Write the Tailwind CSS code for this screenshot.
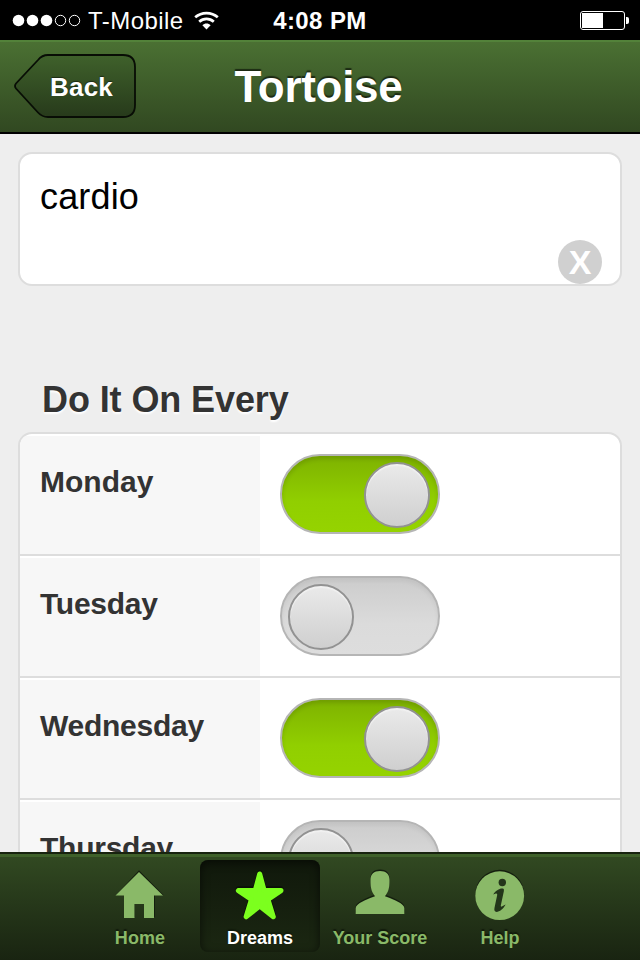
<!DOCTYPE html>
<html lang="en">
<head>
<meta charset="utf-8">
<title>Tortoise</title>
<script src="https://cdn.jsdelivr.net/npm/@tailwindcss/browser@4"></script>
</head>
<body class="w-[640px] h-[960px] overflow-hidden bg-[#eeeeee] font-['Liberation_Sans',Arial,sans-serif]">
<div class="flex flex-col h-[960px] overflow-hidden">

  <!-- Status bar -->
  <div class="h-10 shrink-0 bg-black text-white grid grid-cols-[260px_120px_260px] items-center">
    <div class="flex items-center pl-3">
      <svg class="w-[70px] h-[14px]" viewBox="0 0 70 14" fill="#fff">
        <circle cx="6.5" cy="7.5" r="5.8"/><circle cx="20.5" cy="7.5" r="5.8"/><circle cx="34.5" cy="7.5" r="5.8"/>
        <circle cx="48.5" cy="7.5" r="5.2" fill="none" stroke="#fff"/><circle cx="62.5" cy="7.5" r="5.2" fill="none" stroke="#fff"/>
      </svg>
      <span class="ml-[6px] w-[106px] text-[24px] leading-6 tracking-[0.45px] whitespace-nowrap pt-[2px]">T-Mobile</span>
      <svg class="w-[25px] h-[19px]" viewBox="0 0 25 19" fill="none" stroke="#fff" stroke-width="2.700">
        <path d="M1.200 6.300C7.600 .6 17.400 .6 23.800 6.300"/><path d="M5.200 10.700c4.200-3.900 10.400-3.900 14.600 0"/>
        <path d="M8.400 14.300c2.200-2.400 6-2.400 8.200 0L12.500 18.600z" fill="#fff" stroke="none"/>
      </svg>
    </div>
    <div class="text-center text-[24px] leading-6 font-bold whitespace-nowrap tracking-[0.4px] pt-[2px]">4:08 PM</div>
    <div class="flex justify-end pr-[10px]">
      <svg class="w-[50px] h-5" viewBox="0 0 50 20">
        <rect x=".5" y="1.5" width="44" height="18" rx="2.5" fill="none" stroke="#fff"/>
        <rect x="2" y="3" width="21" height="15" fill="#fff"/>
        <path d="M46 7h1q2 0 2 2v3q0 2-2 2h-1z" fill="#fff"/>
      </svg>
    </div>
  </div>

  <!-- Title bar -->
  <header class="h-[94px] shrink-0 border-b-2 border-black bg-linear-to-b from-[#4b7133] to-[#314821] shadow-[inset_0_2px_0_#53823a] grid grid-cols-[200px_240px_200px] items-center">
    <div class="pl-[14px] pb-[1px]">
      <div class="grid w-[122px] h-[64px]">
        <svg class="col-start-1 row-start-1 w-[122px] h-[64px]" viewBox="0 0 122 64">
          <defs><linearGradient id="back" x1="0" y1="0" x2="0" y2="1"><stop offset="0" stop-color="#3f612b"/><stop offset="1" stop-color="#273a1b"/></linearGradient></defs>
          <path d="M34 1H109Q121 1 121 13V51Q121 63 109 63H34Q28 63 24 58.500L2 34.500Q0 32 2 29.500L24 6Q28 1 34 1z" fill="url(#back)" stroke="#080d05" stroke-width="1.800"/>
        </svg>
        <span class="col-start-1 row-start-1 self-center pl-9 pt-[2px] text-[26px] leading-8 font-bold text-white tracking-[0.2px] [text-shadow:0_-1px_1px_#1c2a13]">Back</span>
      </div>
    </div>
    <h1 class="text-center text-[44px] leading-[52px] font-bold text-white [text-shadow:0_-2px_1px_#1c2a13] whitespace-nowrap tracking-[-0.3px] -ml-[3px] pt-[2px]">Tortoise</h1>
  </header>

  <!-- Content -->
  <main class="grow min-h-0 overflow-hidden px-[18px] pt-[18px]">
    <div class="h-[134px] rounded-[14px] border-2 border-[#dddddd] bg-white flex justify-between pl-5 pr-[18px]">
      <div class="pt-[21px] text-[36px] leading-[44px] tracking-[0.15px] text-black">cardio</div>
      <div class="self-end w-11 h-11 rounded-full bg-[#d0d0d0] text-white text-[34px] leading-[44px] font-bold text-center">X</div>
    </div>

    <h2 class="mt-[92px] ml-6 h-[54px] text-[36px] leading-[44px] font-bold text-[#333333] tracking-[-0.1px] [text-shadow:0_2px_2px_#fff] whitespace-nowrap">Do It On Every</h2>

    <div class="rounded-t-[14px] border-2 border-[#dddddd] bg-white overflow-hidden">
      <div class="h-[122px] border-b-2 border-[#dddddd] flex">
        <div class="w-60 mt-[2px] pt-7 pl-5 bg-[#f7f7f7] text-[30px] leading-9 font-bold text-[#333333]">Monday</div>
        <div class="mt-5 ml-5 w-40 h-20 rounded-full border-2 border-[#b5b5b5] bg-linear-to-b from-[#7eb200] via-[#91cf00] via-60% to-[#95d300] shadow-[inset_0_3px_4px_rgba(0,0,0,0.12)] p-[6px] flex justify-end"><div class="mr-[2px] w-[66px] h-[66px] rounded-full border-2 border-[#929292] bg-linear-to-b from-[#eaeaea] to-[#cfcfcf] shadow-[inset_0_2px_1px_#f1f1f1]"></div></div>
      </div>
      <div class="h-[122px] border-b-2 border-[#dddddd] flex">
        <div class="w-60 mt-[2px] pt-7 pl-5 bg-[#f7f7f7] text-[30px] leading-9 font-bold text-[#333333] tracking-[-0.25px]">Tuesday</div>
        <div class="mt-5 ml-5 w-40 h-20 rounded-full border-2 border-[#b5b5b5] bg-linear-to-b from-[#cccccc] via-[#dbdbdb] via-60% to-[#dddddd] shadow-[inset_0_3px_4px_rgba(0,0,0,0.05)] p-[6px] flex"><div class="w-[66px] h-[66px] rounded-full border-2 border-[#929292] bg-linear-to-b from-[#eaeaea] to-[#cfcfcf] shadow-[inset_0_2px_1px_#f1f1f1]"></div></div>
      </div>
      <div class="h-[122px] border-b-2 border-[#dddddd] flex">
        <div class="w-60 mt-[2px] pt-7 pl-5 bg-[#f7f7f7] text-[30px] leading-9 font-bold text-[#333333] tracking-[-0.25px]">Wednesday</div>
        <div class="mt-5 ml-5 w-40 h-20 rounded-full border-2 border-[#b5b5b5] bg-linear-to-b from-[#7eb200] via-[#91cf00] via-60% to-[#95d300] shadow-[inset_0_3px_4px_rgba(0,0,0,0.12)] p-[6px] flex justify-end"><div class="mr-[2px] w-[66px] h-[66px] rounded-full border-2 border-[#929292] bg-linear-to-b from-[#eaeaea] to-[#cfcfcf] shadow-[inset_0_2px_1px_#f1f1f1]"></div></div>
      </div>
      <div class="h-[122px] border-b-2 border-[#dddddd] flex">
        <div class="w-60 mt-[2px] pt-7 pl-5 bg-[#f7f7f7] text-[30px] leading-9 font-bold text-[#333333] tracking-[-0.25px]">Thursday</div>
        <div class="mt-5 ml-5 w-40 h-20 rounded-full border-2 border-[#b5b5b5] bg-linear-to-b from-[#cccccc] via-[#dbdbdb] via-60% to-[#dddddd] shadow-[inset_0_3px_4px_rgba(0,0,0,0.05)] p-[6px] flex"><div class="w-[66px] h-[66px] rounded-full border-2 border-[#929292] bg-linear-to-b from-[#eaeaea] to-[#cfcfcf] shadow-[inset_0_2px_1px_#f1f1f1]"></div></div>
      </div>
    </div>
  </main>

  <!-- Tab bar -->
  <nav class="h-[108px] shrink-0 border-t-2 border-[#18230f] bg-linear-to-b from-[#324a22] to-[#192411] shadow-[inset_0_3px_0_#3f612a] flex justify-center pt-[6px] text-[18px] leading-6 font-bold text-[#8ab968] text-center [text-shadow:0_-2px_1px_#121b0c] whitespace-nowrap">
    <div class="w-[120px] h-[92px] flex flex-col items-center pt-2">
      <svg class="w-[50px] h-[58px]" viewBox="0 0 50 58">
        <path d="M24 2.200L48.500 27H40V49H29V35H20V49H10V27H1z" fill="#141e0e"/>
        <path d="M24 4L48 27.500H39V50H29V36H19.500V50H9V27.500H.5z" fill="#8ab968"/>
      </svg>
      <div class="tracking-[0.1px]">Home</div>
    </div>
    <div class="w-[120px] h-[92px] flex flex-col items-center pt-2 rounded-lg bg-linear-to-b from-[#10180b] to-[#1b2712] shadow-[inset_0_2px_10px_rgba(0,0,0,0.6)]">
      <svg class="w-[50px] h-[58px]" viewBox="0 0 50 58">
        <path d="M24.700 6L29.200 22.300H46L33.500 32L38.600 48.700L24.700 38L10.800 48.700L16 32L3.400 22.300H20.200z" fill="#0b1107" stroke="#0b1107" stroke-width="5" stroke-linejoin="round" transform="translate(0 -1.500)"/>
        <path d="M24.700 6L29.200 22.600H46L33 31.500L38.300 48.800L24.700 38L11.100 48.800L16.400 31.500L3.400 22.600H20.200z" fill="#7cff1e" stroke="#7cff1e" stroke-width="5" stroke-linejoin="round"/>
      </svg>
      <div class="text-white">Dreams</div>
    </div>
    <div class="w-[120px] h-[92px] flex flex-col items-center pt-2">
      <svg class="w-[50px] h-[58px]" viewBox="0 0 50 58">
        <path d="M25 3C31 3 34.500 6 34.500 12C34.500 19 34 23 30 28.300Q36 30.300 40.500 32.600Q49.300 36.800 49.300 40V46H.7V40Q.7 36.800 9.500 32.600Q14 30.300 20 28.300C16 23 15.500 19 15.500 12C15.500 6 19 3 25 3z" fill="#141e0e" transform="translate(0 -1.500)"/>
        <path d="M25 3C31 3 34.500 6 34.500 12C34.500 19 34 23 30 28.300Q36 30.300 40.500 32.600Q49.300 36.800 49.300 40V46H.7V40Q.7 36.800 9.500 32.600Q14 30.300 20 28.300C16 23 15.500 19 15.500 12C15.500 6 19 3 25 3z" fill="#8ab968"/>
      </svg>
      <div>Your Score</div>
    </div>
    <div class="w-[120px] h-[92px] flex flex-col items-center pt-2">
      <svg class="w-[50px] h-[58px]" viewBox="0 0 50 58">
        <circle cx="24.700" cy="26.200" r="24.400" fill="#141e0e"/>
        <circle cx="24.700" cy="27.700" r="24.400" fill="#8ab968"/>
        <circle cx="27.300" cy="14.500" r="3.700" fill="#23351a"/>
        <path d="M18.200 26.600C20.500 22.500 25 20 28 20.600Q29.300 21 28.900 23L25.800 37.500Q25.600 39.300 27.300 38.300L30.600 36.600C28.500 41 24.500 44 21.500 44Q18.700 43.500 19.500 39.800L22.200 27Q22.400 25 20.900 25.500z" fill="#23351a"/>
      </svg>
      <div>Help</div>
    </div>
  </nav>
</div>
</body>
</html>
